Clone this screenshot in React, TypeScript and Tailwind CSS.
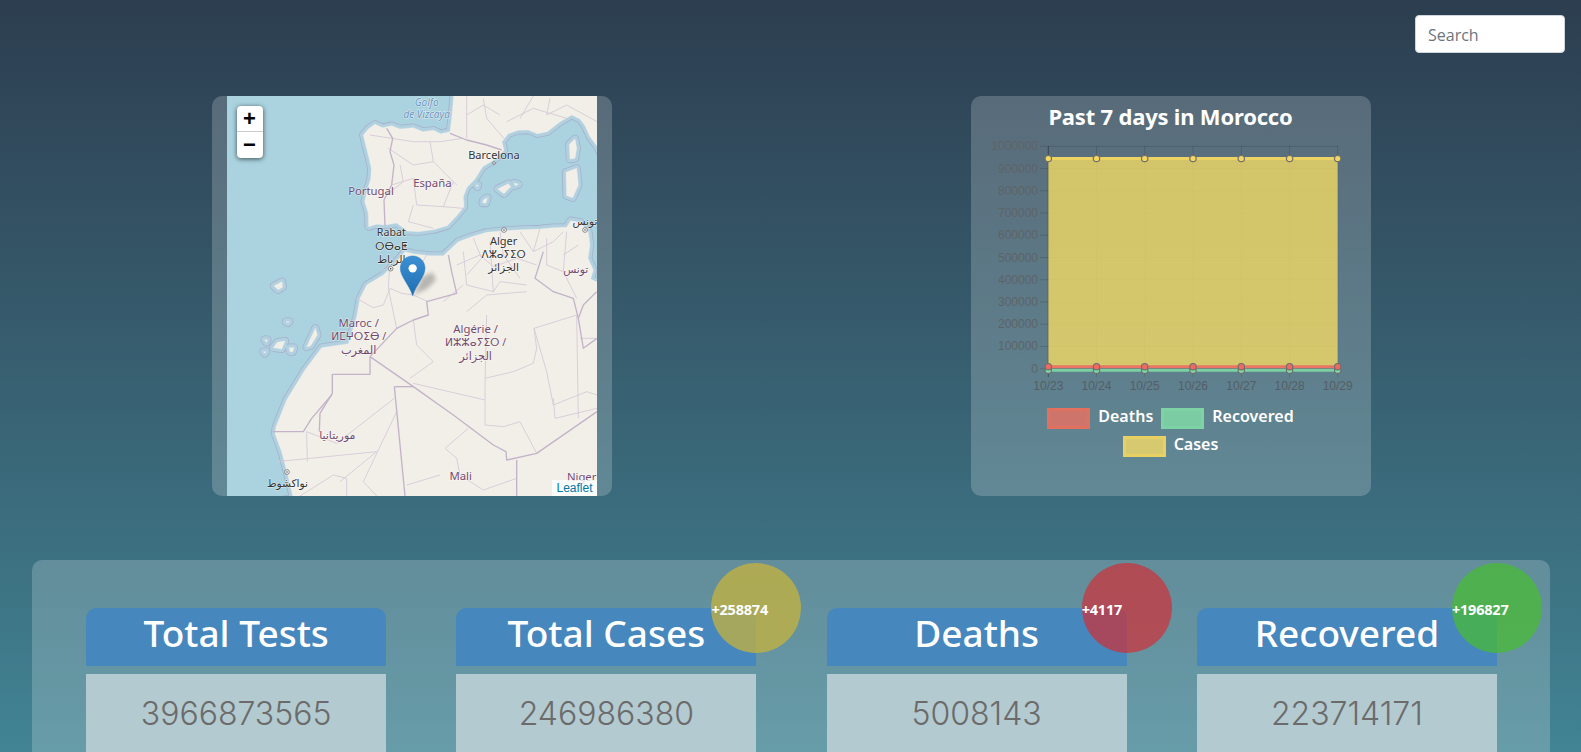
import React from "react";

const landEurope =
  "M762 20 L756 90 L750 140 L722 146 L700 136 L668 140 L640 128 L600 132 L575 122 L548 128 L525 118 L505 132 L490 150 L497 180 L506 215 L514 250 L512 282 L500 320 L494 350 L505 385 L506 425 L530 418 L556 420 L590 414 L622 438 L655 440 L700 434 L742 422 L770 392 L792 365 L790 335 L800 308 L825 282 L848 245 L880 226 L912 196 L906 170 L925 146 L955 136 L985 135 L1012 146 L1042 140 L1078 112 L1115 90 L1140 102 L1155 122 L1170 155 L1190 182 L1210 220 L1210 20 Z";
const landAfrica =
  "M215 1250 L280 1240 L262 1165 L245 1100 L225 1046 L228 1025 L260 945 L315 855 L365 788 L445 776 L470 695 L480 640 L500 600 L550 570 L590 530 L615 500 L640 506 L690 512 L730 512 L775 470 L815 455 L860 442 L910 437 L965 434 L1020 432 L1060 428 L1100 427 L1112 407 L1140 412 L1165 440 L1170 480 L1164 520 L1180 555 L1172 582 L1210 600 L1210 1250 Z";
const islands = [
  "M1108 178 L1125 162 L1130 190 L1125 220 L1110 222 Z",
  "M1098 262 L1130 250 L1135 300 L1118 338 L1100 332 Z",
  "M893 312 L925 296 L932 305 L912 326 Z",
  "M850 345 L862 338 L858 354 L848 354 Z",
  "M828 300 L834 300 L832 306 Z",
  "M943 294 L955 298 L945 302 Z",
  "M222 603 L246 590 L248 606 L235 614 Z",
  "M258 710 L268 710 L264 714 Z",
  "M194 764 L202 764 L199 772 Z",
  "M190 800 L198 800 L195 805 Z",
  "M220 788 L232 772 L255 768 L245 792 Z",
  "M268 788 L282 788 L278 800 L270 800 Z",
  "M320 786 L346 730 L352 750 L332 782 Z",
];

const bigBorders = [
  "M560 130 L578 160 L570 200 L582 240 L575 300 L552 345 L555 422",
  "M750 145 L800 165 L860 180 L905 195",
  "M745 510 L755 560 L770 625 L680 650 L685 690 L640 705 L590 730 L510 815",
  "M510 815 L510 868 L397 868 L397 925 L360 985 L358 1040",
  "M218 1040 L310 1040 L335 1000 L395 930",
  "M510 815 L640 905 L760 990 L880 1080 L918 1100 L920 1125 L1010 1105 L1191 980",
  "M583 905 L640 905",
  "M583 905 L615 1233",
  "M1030 500 L1005 580 L1060 620 L1120 640 L1135 700 L1150 790 L1191 760",
  "M950 1125 L950 1233",
  "M1190 620 L1150 660 L1135 700",
];
const thinBorders = [
  "M470 640 L520 668 L550 660 L570 610 L605 625 L640 630 L685 650",
  "M545 560 L570 520 L565 610 L590 730",
  "M640 630 L650 560 L680 510",
  "M565 190 L640 240 L700 230 L770 300",
  "M575 300 L640 280 L650 360 L730 365 L790 370",
  "M510 150 L640 170 L720 170 L790 160",
  "M600 240 L610 290 L560 330",
  "M640 360 L625 410 L700 430",
  "M700 230 L690 170",
  "M730 365 L760 290",
  "M800 30 L800 160",
  "M850 40 L860 100 L920 170",
  "M920 110 L1000 70 L1100 100",
  "M1000 33 L960 100",
  "M800 90 L850 60 L900 90",
  "M1050 40 L1040 90 L1100 60 L1191 110",
  "M790 500 L800 600 L880 620 L900 590 L980 600",
  "M870 470 L880 620",
  "M770 540 L840 510 L880 545 L950 520 L1010 540",
  "M960 440 L1000 500 L1020 430",
  "M820 460 L845 520 L800 570",
  "M900 440 L910 510 L960 580",
  "M1000 500 L1060 470 L1090 440",
  "M1040 460 L1040 540 L1090 560",
  "M1100 440 L1090 560 L1130 640",
  "M1135 480 L1090 510",
  "M640 705 L650 780 L700 830 L630 880",
  "M800 680 L860 630 L980 620",
  "M730 650 L790 600",
  "M860 690 L855 890 L855 1020 L910 1025 L960 1010 L1010 1105",
  "M640 895 L855 945",
  "M855 880 L940 860 L1000 835 L1010 790 L1002 730 L1130 690",
  "M1002 730 L1040 860 L1060 960 L1160 920 L1191 930",
  "M1060 940 L1065 1000 L1191 970",
  "M583 940 L410 1075 L320 1040 L322 1130",
  "M230 1130 L530 1100 L420 1190",
  "M590 980 L490 1190 L530 1233",
  "M805 1030 L735 1090 L770 1120 L780 1170 L850 1215 L950 1180",
  "M300 1233 L400 1170 L440 1180 L440 1233",
  "M1130 690 L1135 1000",
  "M1140 760 L1191 760",
  "M620 1200 L720 1170",
];

const Marker = () => (
  <g>
    <defs>
      <linearGradient id="pin" x1="0" y1="0" x2="0" y2="1">
        <stop offset="0" stopColor="#3b90d3" />
        <stop offset="1" stopColor="#1f6fb2" />
      </linearGradient>
      <filter id="blur" x="-40%" y="-40%" width="180%" height="180%">
        <feGaussianBlur stdDeviation="7" />
      </filter>
    </defs>
    <path d="M640 630 L668 575 L698 562 L708 585 L680 612 Z" fill="#000" opacity="0.24" filter="url(#blur)" />
    <path
      d="M638 632 C628 600 601 575 601 550 C601 528 618 513 638 513 C658 513 675 528 675 550 C675 575 648 600 638 632 Z"
      fill="url(#pin)"
      stroke="#2a78b8"
      strokeWidth="1.5"
    />
    <circle cx="638" cy="550" r="12.5" fill="#fff" />
  </g>
);

type MapLabel = { x: number; y: number; t: string; c?: string; s?: number; i?: boolean };

const labels: MapLabel[] = [
  { x: 680, y: 63, t: "Golfo", c: "#6b94bd", s: 30, i: true },
  { x: 680, y: 98, t: "de Vizcaya", c: "#6b94bd", s: 30, i: true },
  { x: 882, y: 221, t: "Barcelona", c: "#333", s: 33 },
  { x: 513, y: 331, t: "Portugal", c: "#734a6d", s: 34 },
  { x: 697, y: 305, t: "España", c: "#734a6d", s: 34 },
  { x: 574, y: 454, t: "Rabat", c: "#333", s: 32 },
  { x: 574, y: 494, t: "ⵔⴱⴰⵟ", c: "#333", s: 32 },
  { x: 574, y: 534, t: "الرباط", c: "#333", s: 32 },
  { x: 911, y: 480, t: "Alger", c: "#333", s: 33 },
  { x: 911, y: 519, t: "ⴷⵣⴰⵢⵉⵔ", c: "#333", s: 31 },
  { x: 911, y: 559, t: "الجزائر", c: "#333", s: 32 },
  { x: 1155, y: 419, t: "تونس", c: "#333", s: 32 },
  { x: 1127, y: 563, t: "تونس", c: "#734a6d", s: 32 },
  { x: 476, y: 726, t: "Maroc /", c: "#734a6d", s: 34 },
  { x: 476, y: 766, t: "ⵍⵎⵖⵔⵉⴱ /", c: "#734a6d", s: 32 },
  { x: 476, y: 807, t: "المغرب", c: "#734a6d", s: 34 },
  { x: 827, y: 744, t: "Algérie /", c: "#734a6d", s: 34 },
  { x: 827, y: 784, t: "ⵍⵣⵣⴰⵢⵉⵔ /", c: "#734a6d", s: 32 },
  { x: 827, y: 826, t: "الجزائر", c: "#734a6d", s: 34 },
  { x: 412, y: 1063, t: "موريتانيا", c: "#734a6d", s: 33 },
  { x: 262, y: 1205, t: "نواكشوط", c: "#333", s: 32 },
  { x: 782, y: 1185, t: "Mali", c: "#734a6d", s: 34 },
  { x: 1145, y: 1187, t: "Niger", c: "#734a6d", s: 34 },
];

const MapArt = () => (
  <svg viewBox="81 33 1110 1200" className="block h-full w-full" preserveAspectRatio="none">
    <rect x="81" y="33" width="1110" height="1200" fill="#aad3df" />
    <g fill="none" stroke="#a5b2cc" strokeWidth="25" strokeLinejoin="round">
      <path d={landEurope} />
      <path d={landAfrica} />
      {islands.map((d) => (
        <path key={d} d={d} />
      ))}
    </g>
    <g fill="none" stroke="#b2d1e0" strokeWidth="20" strokeLinejoin="round">
      <path d={landEurope} />
      <path d={landAfrica} />
      {islands.map((d) => (
        <path key={d} d={d} />
      ))}
    </g>
    <g fill="#f2efe9" stroke="#f2efe9" strokeLinejoin="round">
      <path d={landEurope} />
      <path d={landAfrica} />
      {islands.map((d) => (
        <path key={d} d={d} />
      ))}
    </g>
    <g fill="none" stroke="#d5c9d7" strokeWidth="2.6" strokeLinejoin="round">
      {thinBorders.map((d) => (
        <path key={d} d={d} />
      ))}
    </g>
    <g fill="none" stroke="#c3b3c9" strokeWidth="4" strokeLinejoin="round">
      {bigBorders.map((d) => (
        <path key={d} d={d} />
      ))}
    </g>
    <g fill="#fff" stroke="#555" strokeWidth="2">
      <circle cx="882" cy="234" r="4" />
      <circle cx="572" cy="551" r="7" />
      <circle cx="912" cy="435" r="7" />
      <circle cx="1155" cy="435" r="7" />
      <circle cx="261" cy="1161" r="7" />
    </g>
    <g fill="#555">
      <circle cx="572" cy="551" r="2.5" />
      <circle cx="912" cy="435" r="2.5" />
      <circle cx="1155" cy="435" r="2.5" />
      <circle cx="261" cy="1161" r="2.5" />
    </g>
    <g
      textAnchor="middle"
      stroke="#ffffff"
      strokeOpacity="0.65"
      strokeWidth="3"
      paintOrder="stroke"
      className="font-['Noto_Sans','DejaVu_Sans',sans-serif]"
    >
      {labels.map((l) => (
        <text key={l.x + l.t} x={l.x} y={l.y} fill={l.c} fontSize={l.s} fontStyle={l.i ? "italic" : "normal"}>
          {l.t}
        </text>
      ))}
    </g>
    <Marker />
  </svg>
);

const days = ["10/23", "10/24", "10/25", "10/26", "10/27", "10/28", "10/29"];
const tickX = [1048.3, 1096.5, 1144.7, 1193, 1241.3, 1289.6, 1337.7];
const yTicks = [1000000, 900000, 800000, 700000, 600000, 500000, 400000, 300000, 200000, 100000, 0];

const Chart = () => {
  const y = (v: number) => 368.7 - (v / 1000000) * 222.4;
  const yCases = 158.5;
  const yDeaths = 366.7;
  const yRec = 370.2;
  return (
    <svg viewBox="971 140 400 258" className="block h-[258px] w-[400px] font-['Liberation_Sans',sans-serif]">
      {/* grid */}
      {yTicks.map((v) => (
        <line key={v} x1="1040" x2="1338" y1={y(v)} y2={y(v)} stroke="#000" strokeOpacity="0.13" />
      ))}
      {tickX.map((x, i) => (
        <line
          key={x}
          x1={x}
          x2={x}
          y1="146"
          y2="377"
          stroke="#000"
          strokeOpacity={i === 0 ? 0.38 : 0.13}
        />
      ))}
      {/* areas */}
      <rect x="1048.3" y={yCases} width="289.4" height={yDeaths - yCases} fill="#e9d366" fillOpacity="0.85" />
      <line x1="1048.3" x2="1337.7" y1={yCases} y2={yCases} stroke="#edd364" strokeWidth="3" />
      <line x1="1048.3" x2="1337.7" y1={yRec} y2={yRec} stroke="#7ccfa2" strokeWidth="3" />
      <line x1="1048.3" x2="1337.7" y1={yDeaths} y2={yDeaths} stroke="#ea7565" strokeWidth="3" />
      {tickX.map((x) => (
        <g key={x} strokeWidth="1.2" stroke="#6f6f6f">
          <circle cx={x} cy={yCases} r="3.2" fill="#f3d761" />
          <circle cx={x} cy={yRec} r="3.2" fill="#7fdba8" />
          <circle cx={x} cy={yDeaths} r="3.2" fill="#ee6a5f" />
        </g>
      ))}
      {/* labels */}
      {yTicks.map((v) => (
        <text key={v} x="1038" y={y(v) + 4} textAnchor="end" fontSize="12" fill="#5d6468">
          {v}
        </text>
      ))}
      {days.map((d, i) => (
        <text key={d} x={tickX[i]} y="390" textAnchor="middle" fontSize="12" fill="#555e64">
          {d}
        </text>
      ))}
    </svg>
  );
};

const legend = [
  { label: "Deaths", box: "bg-[#cf746a] border-[#e2705f]" },
  { label: "Recovered", box: "bg-[#7bcca3] border-[#7ed3a5]" },
  { label: "Cases", box: "bg-[#d7c970] border-[#e9d062]" },
];

const stats = [
  { title: "Total Tests", total: "3966873565" },
  { title: "Total Cases", total: "246986380", delta: "+258874", bubble: "bg-[rgba(205,181,54,0.7)]" },
  { title: "Deaths", total: "5008143", delta: "+4117", bubble: "bg-[rgba(208,47,54,0.7)]" },
  { title: "Recovered", total: "223714171", delta: "+196827", bubble: "bg-[rgba(71,190,47,0.7)]" },
];

export default function App() {
  return (
    <div className="h-[752px] overflow-hidden bg-gradient-to-b from-[#2c3e50] to-[#418494] font-['Noto_Sans',sans-serif]">
      {/* Search */}
      <div className="flex justify-end pr-[16px] pt-[15px]">
        <input
          placeholder="Search"
          className="h-[38px] w-[150px] rounded-[4px] border border-[#ced4da] bg-white px-3 pt-[2px] text-base font-['Open_Sans',sans-serif] text-[#495057] placeholder:text-[#6c757d]"
        />
      </div>

      {/* Map and chart */}
      <div className="ml-[32px] mr-[31px] mt-[43px] grid grid-cols-2">
        <div className="justify-self-center">
          <div className="flex h-[400px] w-[400px] justify-center rounded-[10px] bg-white/20">
            <div className="relative h-[400px] w-[370px] overflow-hidden">
              <MapArt />
              <div className="absolute left-[10px] top-[10px] w-[26px] overflow-hidden rounded-[4px] bg-white shadow-[0_1px_5px_rgba(0,0,0,0.65)]">
                <div className="flex h-[26px] items-center justify-center border-b border-[#ccc] font-['Liberation_Sans',sans-serif] text-[22px] font-bold leading-none text-black">
                  +
                </div>
                <div className="flex h-[26px] items-center justify-center font-['Liberation_Sans',sans-serif] text-[22px] font-bold leading-none text-black">
                  −
                </div>
              </div>
              <div className="absolute bottom-0 right-0 bg-white/80 px-[4px] font-['Liberation_Sans',sans-serif] text-[12px] leading-4 text-[#0078a8]">
                Leaflet
              </div>
            </div>
          </div>
        </div>

        <div className="justify-self-center">
          <div className="h-[400px] w-[400px] rounded-[10px] bg-white/20">
            <h2 className="h-[44px] text-center text-[22px] font-bold leading-[40px] tracking-[-0.2px] text-white">
              Past 7 days in Morocco
            </h2>
            <Chart />
            <div className="mx-auto mt-[10px] flex w-[330px] flex-wrap justify-center gap-x-2 gap-y-[7px]">
              {legend.map((l) => (
                <div key={l.label} className="flex h-[21px] items-start gap-2">
                  <span className={`h-[21px] w-[43px] border-[3px] ${l.box}`} />
                  <span className="text-[16px] font-semibold leading-[16px] text-white">{l.label}</span>
                </div>
              ))}
            </div>
          </div>
        </div>
      </div>

      {/* Totals */}
      <div className="ml-[32px] mr-[31px] mt-[64px] h-[300px] rounded-[10px] bg-white/20 pl-[19px] pr-[18px] pt-[48px]">
        <div className="grid grid-cols-4">
          {stats.map((s) => (
            <div key={s.title} className="relative mx-auto w-[300px]">
              <div className="h-[58px] rounded-t-[10px] bg-[#4687bd] text-center text-[37px] font-medium leading-[50px] text-white">
                {s.title}
              </div>
              <div className="mt-2 h-[120px] bg-[#b3cad0] pt-[16px] text-center font-['Inter',sans-serif] text-[32px] font-light leading-[48px] text-[#6b6b6b]">
                {s.total}
              </div>
              {s.delta && (
                <div
                  className={`absolute left-[255px] top-[-45px] flex h-[90px] w-[90px] items-center rounded-full ${s.bubble}`}
                >
                  <span className="pt-[2px] text-[14.5px] font-bold leading-none tracking-[-0.2px] text-white">{s.delta}</span>
                </div>
              )}
            </div>
          ))}
        </div>
      </div>
    </div>
  );
}
